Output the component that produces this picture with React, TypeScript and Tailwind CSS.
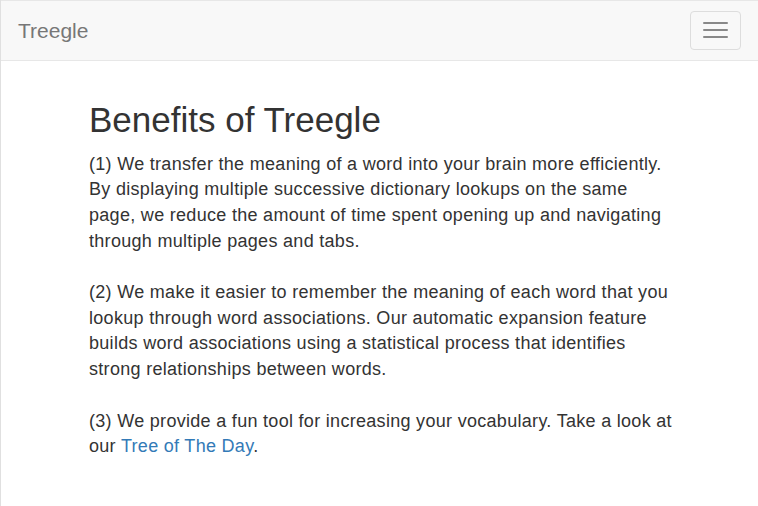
export default function App() {
  return (
    <div
      className="min-h-[506px] w-full bg-white border-l border-[#e0e0e0]"
      style={{ fontFamily: '"Liberation Sans", Arial, sans-serif' }}
    >
      <nav className="h-[61px] bg-[#f8f8f8] border-t border-b border-[#e7e7e7] flex items-center justify-between pl-[17px] pr-[17px]">
        <span className="text-[21px] text-[#777] leading-none">Treegle</span>
        <button className="w-[51px] h-[39px] mt-[-1px] rounded-[4px] border border-[#ddd] flex flex-col items-center justify-center gap-[5px]">
          <span className="block w-[25px] h-[2px] bg-[#888] rounded-[1px]" />
          <span className="block w-[25px] h-[2px] bg-[#888] rounded-[1px]" />
          <span className="block w-[25px] h-[2px] bg-[#888] rounded-[1px]" />
        </button>
      </nav>
      <main className="pl-[88px] pt-[40px]">
        <div className="w-[586px] text-[#333]">
          <h1 className="text-[35px] leading-[1.1] font-normal">Benefits of Treegle</h1>
          <p className="mt-[12px] text-[18px] leading-[25.7px] tracking-[0.3px]">
            (1) We transfer the meaning of a word into your brain more efficiently. By displaying multiple successive dictionary lookups on the same page, we reduce the amount of time spent opening up and navigating through multiple pages and tabs.
            <br />
            <br />
            (2) We make it easier to remember the meaning of each word that you lookup through word associations. Our automatic expansion feature builds word associations using a statistical process that identifies strong relationships between words.
            <br />
            <br />
            (3) We provide a fun tool for increasing your vocabulary. Take a look at our{" "}
            <a href="#" className="text-[#337ab7]">Tree of The Day</a>.
          </p>
        </div>
      </main>
    </div>
  );
}
